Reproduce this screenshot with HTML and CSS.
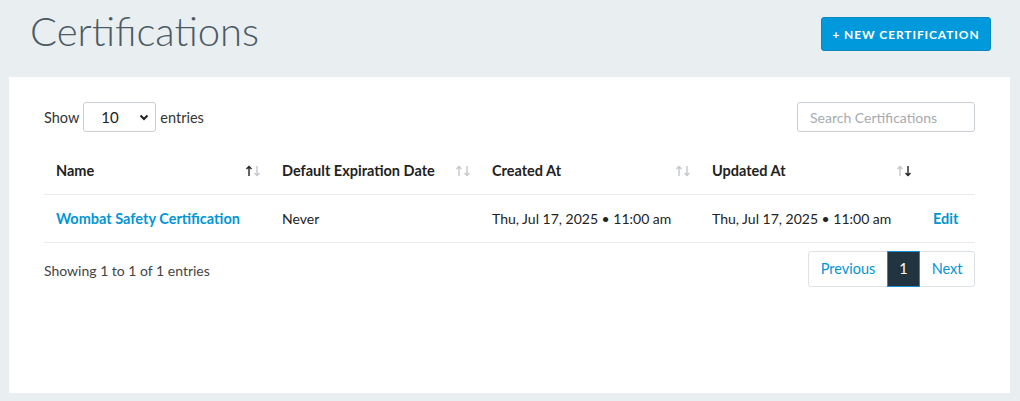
FILE: index.html
```html
<!DOCTYPE html>
<html lang="en">

<head>
    <meta charset="UTF-8">
    <meta name="viewport" content="width=device-width, initial-scale=1.0">
    <title>Certifications</title>
    <link rel="stylesheet" href="styles.css">
</head>

<body>

    <header class="page-header">
        <h1>Certifications</h1>
        <button class="btn-new" type="button">+ New Certification</button>
    </header>

    <section class="card">
        <div class="controls">
            <label class="length">
                Show
                <span class="select-wrap">
                    <select>
                        <option>10</option>
                        <option>25</option>
                        <option>50</option>
                    </select>
                    <svg class="chevron" width="10" height="7" viewBox="0 0 10 7">
                        <polyline points="1.5,1.5 5,5 8.5,1.5" fill="none" stroke="#222" stroke-width="2" />
                    </svg>
                </span>
                entries
            </label>
            <input class="search" type="text" placeholder="Search Certifications">
        </div>

        <table>
            <thead>
                <tr>
                    <th class="col-name">Name <svg class="sort" width="16" height="12" viewBox="0 0 16 12"><g fill="none" stroke-width="1.4"><path d="M4 11V1.5M1.5 4L4 1.5 6.5 4" stroke="#222" /><path d="M12 1v9.5M9.5 8l2.5 2.5L14.5 8" stroke="#c4c8cc" /></g></svg></th>
                    <th class="col-exp">Default Expiration Date <svg class="sort" width="16" height="12" viewBox="0 0 16 12"><g fill="none" stroke-width="1.4"><path d="M4 11V1.5M1.5 4L4 1.5 6.5 4" stroke="#c4c8cc" /><path d="M12 1v9.5M9.5 8l2.5 2.5L14.5 8" stroke="#c4c8cc" /></g></svg></th>
                    <th class="col-created">Created At <svg class="sort" width="16" height="12" viewBox="0 0 16 12"><g fill="none" stroke-width="1.4"><path d="M4 11V1.5M1.5 4L4 1.5 6.5 4" stroke="#c4c8cc" /><path d="M12 1v9.5M9.5 8l2.5 2.5L14.5 8" stroke="#c4c8cc" /></g></svg></th>
                    <th class="col-updated">Updated At <svg class="sort" width="16" height="12" viewBox="0 0 16 12"><g fill="none" stroke-width="1.4"><path d="M4 11V1.5M1.5 4L4 1.5 6.5 4" stroke="#c4c8cc" /><path d="M12 1v9.5M9.5 8l2.5 2.5L14.5 8" stroke="#222" /></g></svg></th>
                    <th class="col-edit"></th>
                </tr>
            </thead>
            <tbody>
                <tr>
                    <td><a class="name-link" href="#">Wombat Safety Certification</a></td>
                    <td>Never</td>
                    <td>Thu, Jul 17, 2025 &bull; 11:00 am</td>
                    <td>Thu, Jul 17, 2025 &bull; 11:00 am</td>
                    <td><a class="edit-link" href="#">Edit</a></td>
                </tr>
            </tbody>
        </table>

        <div class="table-footer">
            <p class="info">Showing 1 to 1 of 1 entries</p>
            <ul class="pagination">
                <li><a href="#">Previous</a></li>
                <li class="active"><a href="#">1</a></li>
                <li><a href="#">Next</a></li>
            </ul>
        </div>
    </section>

</body>

</html>
```

FILE: styles.css
```css
body {
    font-family: Lato, "Open Sans", sans-serif;
    margin: 0;
    padding: 0;
    background-color: #e9eef1;
    color: #222;
    font-size: 14px;
}

.page-header {
    display: flex;
    justify-content: space-between;
    align-items: flex-start;
    height: 77px;
    padding: 0 29px 0 30px;
}

.page-header h1 {
    margin: 5px 0 0;
    font-size: 40px;
    font-weight: 300;
    color: #4b5a63;
    line-height: 52px;
}

.btn-new {
    margin-top: 17px;
    width: 170px;
    height: 34px;
    background-color: #0099dc;
    border: 1px solid #0a86c0;
    border-radius: 3px;
    color: #fff;
    font-family: inherit;
    font-size: 12px;
    font-weight: 700;
    letter-spacing: 0.9px;
    text-transform: uppercase;
    padding: 0;
}

.card {
    background-color: #fff;
    margin: 0 10px 0 9px;
    height: 316px;
    padding: 25px 35px 0;
    box-sizing: border-box;
}

.controls {
    display: flex;
    justify-content: space-between;
    align-items: center;
    height: 30px;
}

.length {
    display: flex;
    align-items: center;
    gap: 4px;
    color: #333;
    font-size: 14.5px;
}

.select-wrap {
    position: relative;
    display: inline-block;
}

.select-wrap select {
    appearance: none;
    -webkit-appearance: none;
    width: 73px;
    height: 30px;
    border: 1px solid #c9ced3;
    border-radius: 3px;
    background: #fff;
    padding: 0 0 0 17px;
    font-family: inherit;
    font-size: 15px;
    color: #222;
}

.chevron {
    position: absolute;
    right: 7px;
    top: 12px;
}

.search {
    width: 178px;
    height: 30px;
    box-sizing: border-box;
    border: 1px solid #c9ced3;
    border-radius: 3px;
    padding: 0 12px;
    font-family: inherit;
    font-size: 14px;
}

.search::placeholder {
    color: #a5abb0;
}

table {
    width: 100%;
    border-collapse: collapse;
    margin-top: 15px;
}

th,
td {
    text-align: left;
    padding: 0 12px;
    border-bottom: 1px solid #e6ebee;
}

th {
    height: 47px;
    font-weight: 700;
    font-size: 14.5px;
    position: relative;
}

td {
    height: 47px;
}

.col-name { width: 202px; }
.col-exp { width: 186px; }
.col-created { width: 196px; }
.col-updated { width: 197px; }

.sort {
    position: absolute;
    right: 9px;
    top: 18px;
}

.name-link,
.edit-link {
    color: #0096d6;
    font-weight: 700;
    font-size: 14.5px;
    text-decoration: none;
}

.table-footer {
    display: flex;
    justify-content: space-between;
    align-items: center;
    margin-top: 8px;
}

.info {
    margin: 0;
    padding-top: 3px;
    color: #444;
}

.pagination {
    display: flex;
    list-style-type: none;
    margin: 0;
    padding: 0;
}

.pagination a {
    display: block;
    height: 34px;
    line-height: 34px;
    padding: 0 11.5px;
    border: 1px solid #dde2e6;
    margin-left: -1px;
    color: #0096d6;
    text-decoration: none;
    font-size: 14.5px;
}

.pagination li:first-child a {
    border-radius: 3px 0 0 3px;
}

.pagination li:last-child a {
    border-radius: 0 3px 3px 0;
}

.pagination .active a {
    background-color: #22343f;
    border-color: #1a8fcf;
    color: #fff;
    position: relative;
}
```
